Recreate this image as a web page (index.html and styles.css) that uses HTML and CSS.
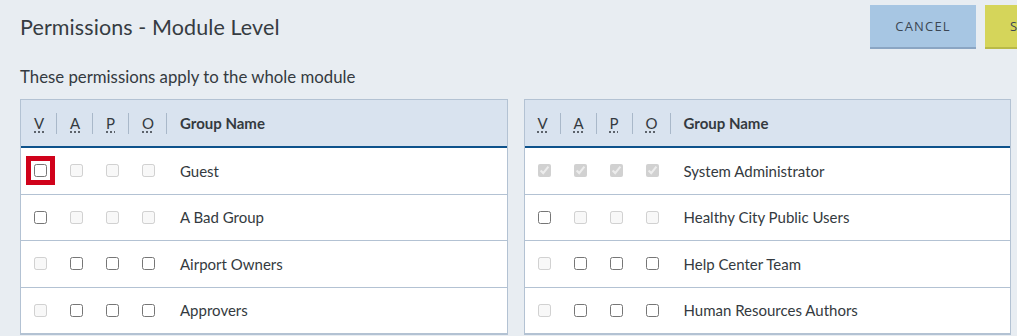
FILE: index.html
```html
<!DOCTYPE html>
<html lang="en">
<head>
<meta charset="utf-8">
<title>Permissions - Module Level</title>
<link rel="stylesheet" href="styles.css">
</head>
<body>
<div class="page">
  <div class="topbar">
    <h1 class="title">Permissions - Module Level</h1>
    <div class="actions">
      <button class="btn btn-cancel">CANCEL</button>
      <button class="btn btn-save">SAVE</button>
    </div>
  </div>
  <p class="subtitle">These permissions apply to the whole module</p>
  <div class="grid">
    <table class="perm-table">
      <colgroup><col class="c-perm"><col class="c-perm"><col class="c-perm"><col class="c-perm4"><col></colgroup>
      <thead>
        <tr>
          <th class="sep"><abbr title="View">V</abbr></th>
          <th class="sep"><abbr title="Add">A</abbr></th>
          <th class="sep"><abbr title="Publish">P</abbr></th>
          <th class="sep"><abbr title="Owner">O</abbr></th>
          <th class="name">Group Name</th>
        </tr>
      </thead>
      <tbody>
        <tr>
          <td><input type="checkbox" class="focus"></td>
          <td><input type="checkbox" disabled></td>
          <td><input type="checkbox" disabled></td>
          <td><input type="checkbox" disabled></td>
          <td class="name">Guest</td>
        </tr>
        <tr>
          <td><input type="checkbox"></td>
          <td><input type="checkbox" disabled></td>
          <td><input type="checkbox" disabled></td>
          <td><input type="checkbox" disabled></td>
          <td class="name">A Bad Group</td>
        </tr>
        <tr>
          <td><input type="checkbox" disabled></td>
          <td><input type="checkbox"></td>
          <td><input type="checkbox"></td>
          <td><input type="checkbox"></td>
          <td class="name">Airport Owners</td>
        </tr>
        <tr>
          <td><input type="checkbox" disabled></td>
          <td><input type="checkbox"></td>
          <td><input type="checkbox"></td>
          <td><input type="checkbox"></td>
          <td class="name">Approvers</td>
        </tr>
      </tbody>
    </table>
    <table class="perm-table">
      <colgroup><col class="c-perm"><col class="c-perm"><col class="c-perm"><col class="c-perm4"><col></colgroup>
      <thead>
        <tr>
          <th class="sep"><abbr title="View">V</abbr></th>
          <th class="sep"><abbr title="Add">A</abbr></th>
          <th class="sep"><abbr title="Publish">P</abbr></th>
          <th class="sep"><abbr title="Owner">O</abbr></th>
          <th class="name">Group Name</th>
        </tr>
      </thead>
      <tbody>
        <tr>
          <td><input type="checkbox" checked disabled></td>
          <td><input type="checkbox" checked disabled></td>
          <td><input type="checkbox" checked disabled></td>
          <td><input type="checkbox" checked disabled></td>
          <td class="name">System Administrator</td>
        </tr>
        <tr>
          <td><input type="checkbox"></td>
          <td><input type="checkbox" disabled></td>
          <td><input type="checkbox" disabled></td>
          <td><input type="checkbox" disabled></td>
          <td class="name">Healthy City Public Users</td>
        </tr>
        <tr>
          <td><input type="checkbox" disabled></td>
          <td><input type="checkbox"></td>
          <td><input type="checkbox"></td>
          <td><input type="checkbox"></td>
          <td class="name">Help Center Team</td>
        </tr>
        <tr>
          <td><input type="checkbox" disabled></td>
          <td><input type="checkbox"></td>
          <td><input type="checkbox"></td>
          <td><input type="checkbox"></td>
          <td class="name">Human Resources Authors</td>
        </tr>
      </tbody>
    </table>
  </div>
</div>
</body>
</html>
```

FILE: styles.css
```css
html, body {
  margin: 0;
  padding: 0;
  overflow: hidden;
}
body {
  background: #e8edf2;
  font-family: "Lato", "Noto Sans", sans-serif;
  color: #343a40;
}
.page {
  padding: 5px 6px 0 20px;
}
.topbar {
  display: flex;
  align-items: center;
  height: 44px;
}
.title {
  margin: 0;
  font-size: 21.5px;
  font-weight: 400;
  color: #363c42;
  letter-spacing: 0.1px;
}
.actions {
  margin-left: auto;
  margin-right: -59px;
  display: flex;
  gap: 9px;
}
.btn {
  height: 44px;
  padding: 0 25px;
  border: none;
  border-bottom: 2px solid;
  font-family: "Open Sans", "Noto Sans", sans-serif;
  font-size: 13px;
  letter-spacing: 1.2px;
  color: #3b4654;
  cursor: pointer;
}
.btn-cancel {
  background: #a7c6e3;
  border-bottom-color: #8aa5c3;
}
.btn-save {
  background: #d5d55a;
  border-bottom-color: #b9ba48;
}
.subtitle {
  margin: 18px 0 12px;
  font-size: 16.8px;
  line-height: 20px;
  color: #343a40;
}
.grid {
  display: grid;
  grid-template-columns: 1fr 1fr;
  gap: 16px;
}
.perm-table {
  width: 100%;
  table-layout: fixed;
  border-collapse: separate;
  border-spacing: 0;
  border: 1px solid #b3c2d3;
  background: #fff;
}
.c-perm { width: 36px; }
.c-perm4 { width: 38px; }
.perm-table th {
  height: 46px;
  padding: 0 0 0 13px;
  text-align: left;
  background: #d9e3ef;
  border-bottom: 2px solid #0e528b;
  font-size: 15px;
  color: #343a40;
}
.perm-table th.sep {
  font-weight: 500;
  padding-left: 13px;
  background: linear-gradient(#a9b8c9, #a9b8c9) right center / 1px 21px no-repeat, #d9e3ef;
}
.perm-table th.name {
  font-weight: 700;
}
abbr {
  text-decoration: underline dotted;
  text-underline-offset: 3px;
  font-weight: 400;
}
.perm-table td {
  height: 45.5px;
  padding: 0 0 0 13px;
  border-bottom: 1px solid #b3c2d3;
  font-size: 15px;
  color: #343a40;
  vertical-align: middle;
}
.perm-table input[type="checkbox"] {
  display: block;
  width: 13px;
  height: 13px;
  margin: 0;
}
.perm-table input.focus {
  outline: 5px solid #d0021b;
  outline-offset: 3px;
}
```
